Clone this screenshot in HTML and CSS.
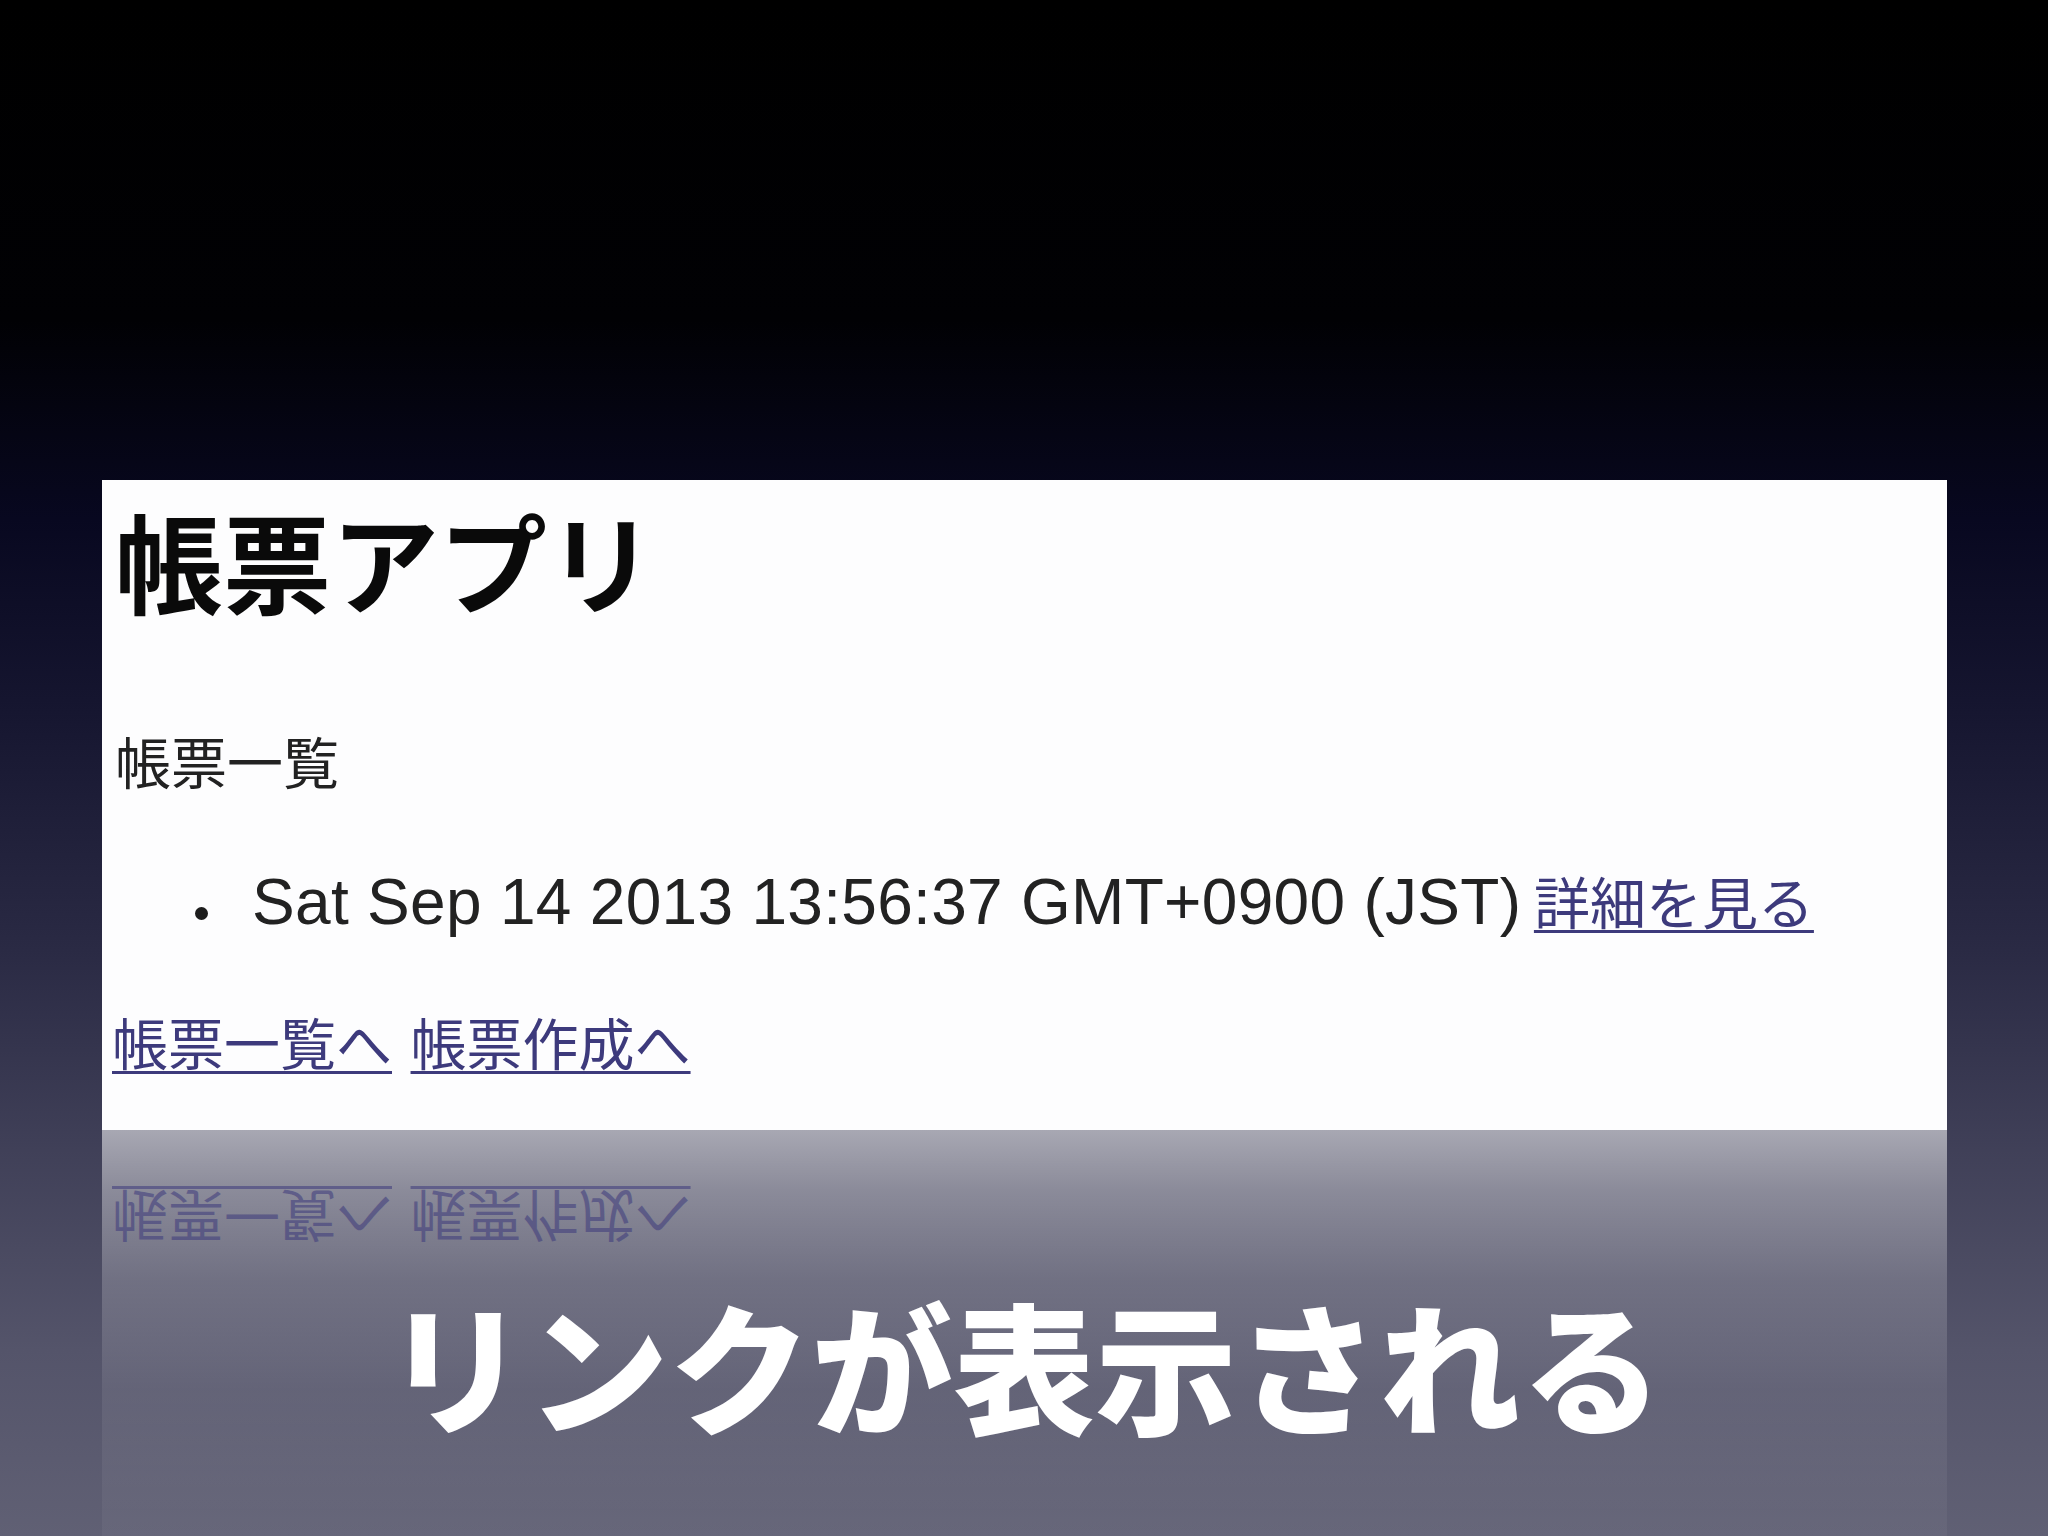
FILE: index.html
```html
<!DOCTYPE html>
<html lang="ja">
<head>
<meta charset="utf-8">
<title>リンクが表示される</title>
<link rel="stylesheet" href="styles.css">
</head>
<body>
<div class="slide">
  <div class="shot">
    <div class="sheet">
      <h1 class="app-title">帳票アプリ</h1>
      <p class="section">帳票一覧</p>
      <ul class="list">
        <li class="item"><span class="date">Sat Sep 14 2013 13:56:37 GMT+0900 (JST)</span> <a class="link" href="#">詳細を見る</a></li>
      </ul>
      <p class="nav"><a class="link" href="#">帳票一覧へ</a> <a class="link" href="#">帳票作成へ</a></p>
    </div>
    <div class="reflection">
      <p class="nav mirror" aria-hidden="true"><span class="link">帳票一覧へ</span> <span class="link">帳票作成へ</span></p>
      <h2 class="caption">リンクが表示される</h2>
    </div>
  </div>
</div>
</body>
</html>
```

FILE: styles.css
```css
html, body {
  margin: 0;
  padding: 0;
}
body {
  width: 2048px;
  height: 1536px;
  overflow: hidden;
  background: linear-gradient(to bottom,
    #000000 0px,
    #010104 320px,
    #080820 520px,
    #15152f 700px,
    #2a2a44 950px,
    #404058 1150px,
    #54546a 1350px,
    #606074 1536px);
  font-family: "Noto Sans CJK JP", "Noto Sans", sans-serif;
}
.slide {
  padding-top: 480px;
}
.shot {
  margin-left: 102px;
  width: 1845px;
}
.sheet {
  background: #fdfdfe;
  height: 650px;
  padding: 25px 0 0 13px;
  box-sizing: border-box;
  color: #1c1c1c;
}
.app-title {
  margin: 0;
  font-size: 108px;
  line-height: 108px;
  font-weight: 700;
  color: #0a0a0a;
}
.section {
  margin: 119px 0 0 0;
  font-size: 56px;
  line-height: 56px;
  color: #222222;
}
.list {
  list-style: none;
  margin: 84px 0 0 0;
  padding: 0 0 0 137px;
}
.item {
  position: relative;
  font-size: 56px;
  line-height: 56px;
  height: 56px;
}
.item::before {
  content: "";
  position: absolute;
  left: -57px;
  top: 35px;
  width: 13px;
  height: 13px;
  border-radius: 50%;
  background: #1c1c1c;
}
.date {
  font-family: "Liberation Sans", "Noto Sans", sans-serif;
  font-size: 64px;
  line-height: 56px;
  letter-spacing: 0.3px;
  color: #222222;
}
.link {
  color: #3d3a7c;
  text-decoration: underline;
  text-decoration-thickness: 3px;
  text-underline-offset: 6px;
}
.nav {
  margin: 85px 0 0 -3px;
  font-size: 56px;
  line-height: 56px;
  height: 56px;
  white-space: nowrap;
  word-spacing: 6px;
}
.reflection {
  height: 406px;
  padding-left: 13px;
  box-sizing: border-box;
  background: linear-gradient(to bottom,
    rgba(255,255,255,0.55) 0px,
    rgba(255,255,255,0.38) 60px,
    rgba(255,255,255,0.2) 150px,
    rgba(255,255,255,0.08) 260px,
    rgba(255,255,255,0.04) 406px);
}
.mirror {
  margin: 0 0 0 -3px;
  padding-top: 61px;
  transform: scaleY(-1);
  transform-origin: 50% 89px;
  opacity: 0.55;
}
.caption {
  margin: 46px 0 0 -13px;
  text-align: center;
  font-size: 141px;
  line-height: 140px;
  font-weight: 900;
  color: #ffffff;
  letter-spacing: 1px;
}
```
